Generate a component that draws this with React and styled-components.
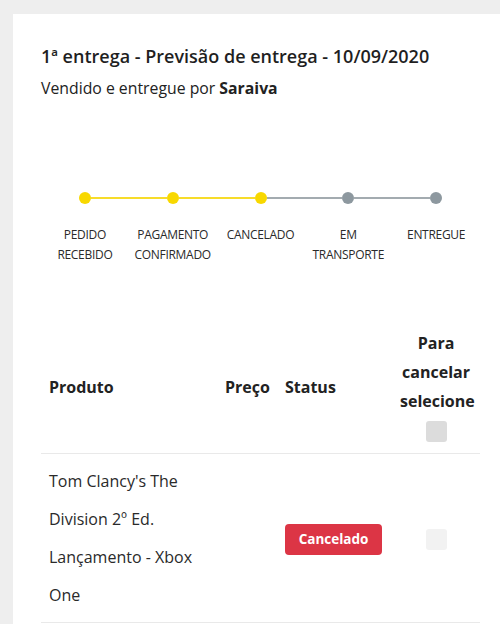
import React from "react";
import styled, { createGlobalStyle } from "styled-components";

const GlobalStyle = createGlobalStyle`
  html, body {
    margin: 0;
    padding: 0;
    background: #eeeeee;
    overflow: hidden;
  }
  body {
    font-family: "Open Sans", "Noto Sans", sans-serif;
    color: #222;
  }
`;

const Page = styled.div`
  padding: 14px 0 0 13px;
`;

const Card = styled.section`
  background: #ffffff;
  padding: 29px 20px 0 28px;
  min-height: 581px;
`;

const Title = styled.h2`
  margin: 0;
  font-size: 18px;
  line-height: 27px;
  font-weight: 600;
  color: #1f1f1f;
`;

const Subtitle = styled.p`
  margin: 6px 0 0;
  font-size: 15.8px;
  line-height: 24px;
  color: #222;
  strong {
    font-weight: 700;
  }
`;

const Timeline = styled.ol`
  list-style: none;
  margin: 92px 0 0;
  padding: 0;
  display: grid;
  grid-template-columns: repeat(5, 1fr);
`;

const Step = styled.li`
  display: flex;
  flex-direction: column;
  align-items: stretch;
`;

const Track = styled.div`
  display: flex;
  align-items: center;
  height: 12px;
`;

const Segment = styled.span`
  flex: 1;
  height: 2px;
  background: ${(p) => (p.$hidden ? "transparent" : p.$done ? "#f7dc2a" : "#a3abb0")};
`;

const Dot = styled.span`
  width: 12px;
  height: 12px;
  border-radius: 50%;
  flex: none;
  background: ${(p) => (p.$done ? "#f8d800" : "#8d989f")};
`;

const StepLabel = styled.span`
  margin-top: 21px;
  text-align: center;
  text-transform: uppercase;
  font-size: 12px;
  letter-spacing: -0.3px;
  line-height: 20px;
  color: #2a2a2a;
`;

const Table = styled.table`
  width: 100%;
  margin-top: 56px;
  border-collapse: collapse;
  table-layout: fixed;
`;

const Col = styled.col`
  width: ${(p) => p.$w}px;
`;

const Th = styled.th`
  padding: 8px;
  font-size: 16px;
  line-height: 29px;
  font-weight: 700;
  color: #222;
  text-align: ${(p) => (p.$center ? "center" : "left")};
  vertical-align: middle;
  border-bottom: 1px solid #e9e9e9;
`;

const Td = styled.td`
  padding: 8px;
  font-size: 16px;
  line-height: 38px;
  color: #2a2a2a;
  text-align: ${(p) => (p.$center ? "center" : "left")};
  vertical-align: middle;
  border-bottom: 1px solid #e9e9e9;
`;

const Check = styled.span`
  display: inline-block;
  width: 21px;
  height: 21px;
  border-radius: 3px;
  vertical-align: middle;
  background: ${(p) => (p.$header ? "#dcdcdc" : "#f2f2f2")};
`;

const StatusBadge = styled.span`
  display: inline-flex;
  align-items: center;
  justify-content: center;
  width: 97px;
  height: 31px;
  border-radius: 4px;
  background: #dc3545;
  color: #ffffff;
  font-size: 13.5px;
  font-weight: 700;
  line-height: 1;
`;

const steps = [
  { label: ["Pedido", "recebido"], done: true },
  { label: ["Pagamento", "confirmado"], done: true },
  { label: ["Cancelado"], done: true },
  { label: ["Em", "transporte"], done: false },
  { label: ["Entregue"], done: false },
];

export default function App() {
  return (
    <>
      <GlobalStyle />
      <Page>
        <Card>
          <Title>1ª entrega - Previsão de entrega - 10/09/2020</Title>
          <Subtitle>
            Vendido e entregue por <strong>Saraiva</strong>
          </Subtitle>

          <Timeline>
            {steps.map((s, i) => (
              <Step key={i}>
                <Track>
                  <Segment $hidden={i === 0} $done={s.done} />
                  <Dot $done={s.done} />
                  <Segment
                    $hidden={i === steps.length - 1}
                    $done={steps[i + 1] && steps[i + 1].done}
                  />
                </Track>
                <StepLabel>
                  {s.label.map((l, j) => (
                    <React.Fragment key={j}>
                      {j > 0 && <br />}
                      {l}
                    </React.Fragment>
                  ))}
                </StepLabel>
              </Step>
            ))}
          </Timeline>

          <Table>
            <colgroup>
              <Col $w={176} />
              <Col $w={60} />
              <Col $w={115} />
              <Col $w={88} />
            </colgroup>
            <thead>
              <tr>
                <Th>Produto</Th>
                <Th>Preço</Th>
                <Th>Status</Th>
                <Th $center>
                  Para cancelar selecione
                  <br />
                  <Check $header />
                </Th>
              </tr>
            </thead>
            <tbody>
              <tr>
                <Td>Tom Clancy's The Division 2º Ed. Lançamento - Xbox One</Td>
                <Td></Td>
                <Td>
                  <StatusBadge>Cancelado</StatusBadge>
                </Td>
                <Td $center>
                  <Check />
                </Td>
              </tr>
            </tbody>
          </Table>
        </Card>
      </Page>
    </>
  );
}
